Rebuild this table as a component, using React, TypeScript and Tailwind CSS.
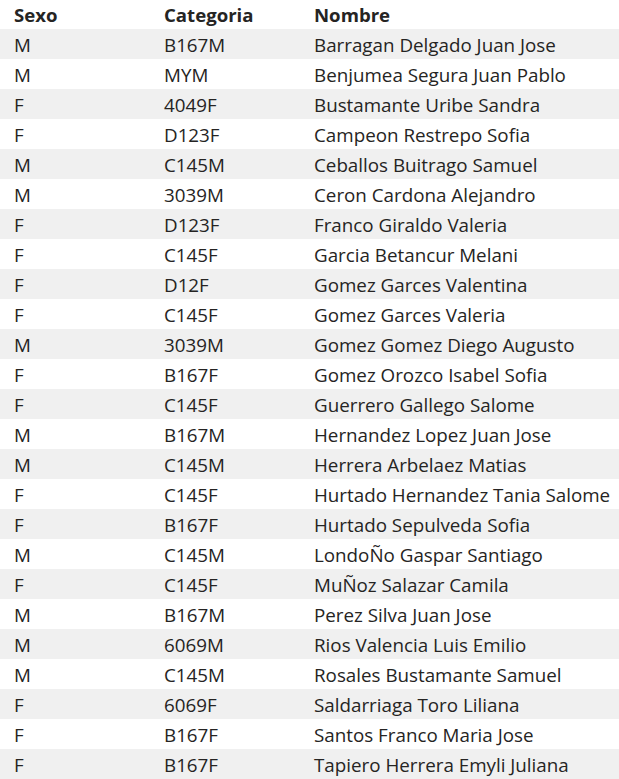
const rows: [string, string, string][] = [
  ['M', 'B167M', 'Barragan Delgado Juan Jose'],
  ['M', 'MYM', 'Benjumea Segura Juan Pablo'],
  ['F', '4049F', 'Bustamante Uribe Sandra'],
  ['F', 'D123F', 'Campeon Restrepo Sofia'],
  ['M', 'C145M', 'Ceballos Buitrago Samuel'],
  ['M', '3039M', 'Ceron Cardona Alejandro'],
  ['F', 'D123F', 'Franco Giraldo Valeria'],
  ['F', 'C145F', 'Garcia Betancur Melani'],
  ['F', 'D12F', 'Gomez Garces Valentina'],
  ['F', 'C145F', 'Gomez Garces Valeria'],
  ['M', '3039M', 'Gomez Gomez Diego Augusto'],
  ['F', 'B167F', 'Gomez Orozco Isabel Sofia'],
  ['F', 'C145F', 'Guerrero Gallego Salome'],
  ['M', 'B167M', 'Hernandez Lopez Juan Jose'],
  ['M', 'C145M', 'Herrera Arbelaez Matias'],
  ['F', 'C145F', 'Hurtado Hernandez Tania Salome'],
  ['F', 'B167F', 'Hurtado Sepulveda Sofia'],
  ['M', 'C145M', 'LondoÑo Gaspar Santiago'],
  ['F', 'C145F', 'MuÑoz Salazar Camila'],
  ['M', 'B167M', 'Perez Silva Juan Jose'],
  ['M', '6069M', 'Rios Valencia Luis Emilio'],
  ['M', 'C145M', 'Rosales Bustamante Samuel'],
  ['F', '6069F', 'Saldarriaga Toro Liliana'],
  ['F', 'B167F', 'Santos Franco Maria Jose'],
  ['F', 'B167F', 'Tapiero Herrera Emyli Juliana'],
];

export default function App() {
  return (
    <div className="w-[619px] h-[779px] overflow-hidden bg-white text-[#252423] font-['Open_Sans',sans-serif] text-[18.8px] leading-[30px]">
      <div className="grid grid-cols-[150px_150px_1fr] h-[29px] font-bold text-[18.6px] leading-[29px]">
        <div className="pl-[14px] whitespace-nowrap">Sexo</div>
        <div className="pl-[14px] whitespace-nowrap">Categoria</div>
        <div className="pl-[14px] whitespace-nowrap">Nombre</div>
      </div>
      {rows.map(([s, c, n], i) => (
        <div
          key={i}
          className={`grid grid-cols-[150px_150px_1fr] h-[30px] pt-[1px] ${i % 2 === 0 ? 'bg-[#f0f0f0]' : 'bg-white'}`}
        >
          <div className="pl-[14px] whitespace-nowrap">{s}</div>
          <div className="pl-[14px] whitespace-nowrap">{c}</div>
          <div className="pl-[14px] whitespace-nowrap">{n}</div>
        </div>
      ))}
    </div>
  );
}
